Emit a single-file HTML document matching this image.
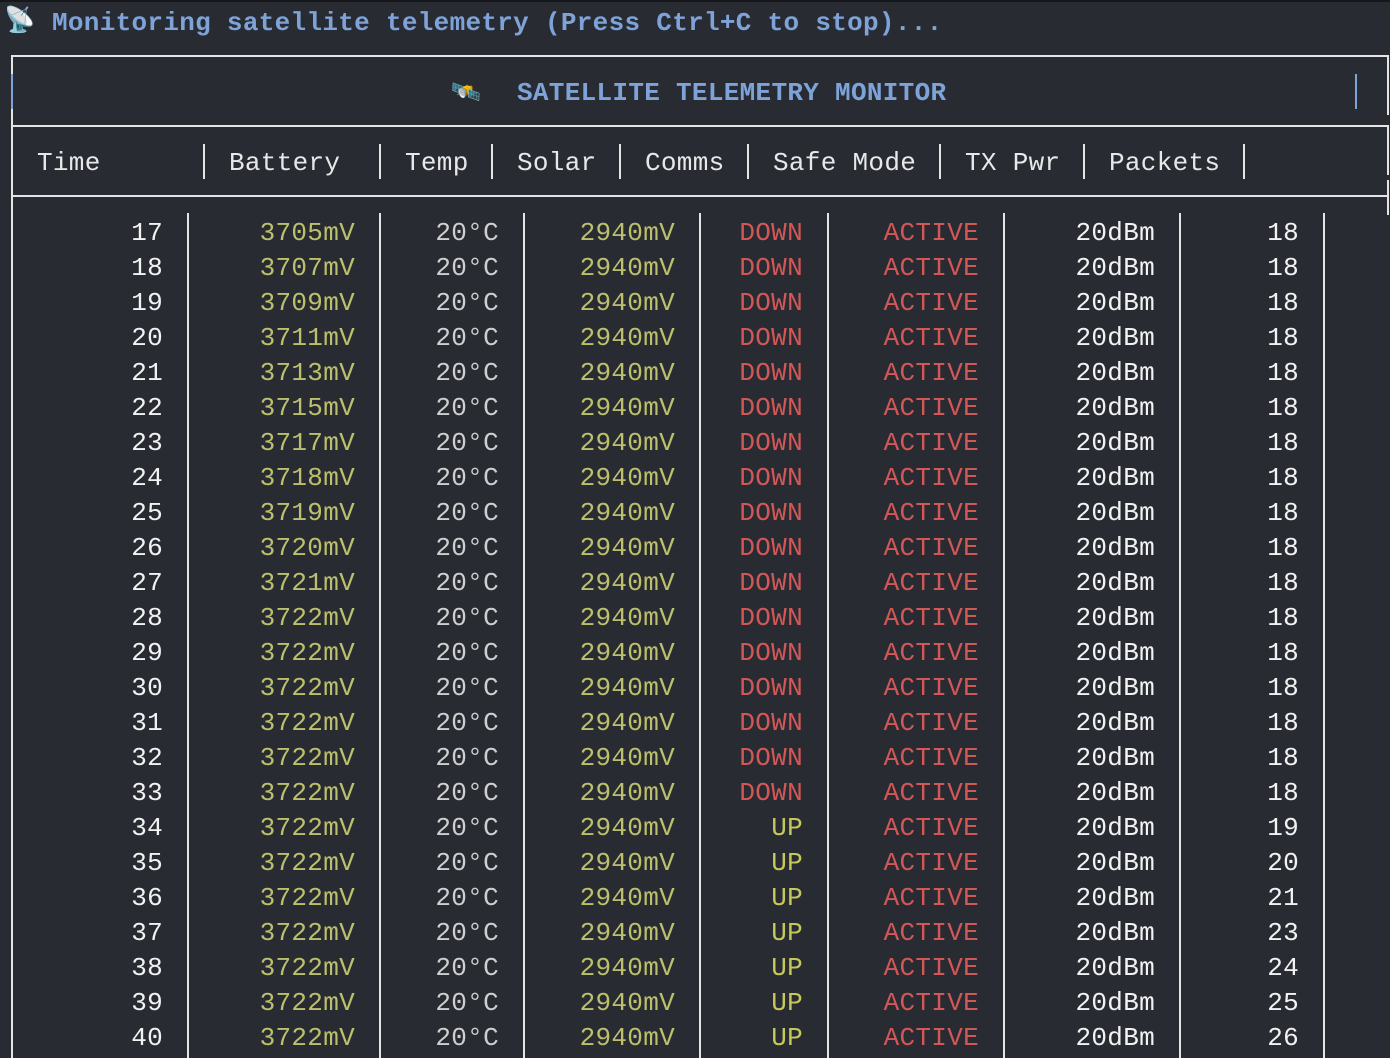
<!DOCTYPE html>
<html><head><meta charset="utf-8"><style>
html,body{margin:0;padding:0;background:#292b33;width:1390px;height:1058px;overflow:hidden;position:relative;font-family:"Liberation Mono","DejaVu Sans Mono",monospace;font-size:26px;letter-spacing:0.3px;}
.a{position:absolute;white-space:pre;}
.h{position:absolute;background:#e4e4e4;height:2px;}
.v{position:absolute;background:#e4e4e4;width:2px;}
.row{position:absolute;left:0;height:35px;line-height:35px;white-space:pre;}
.row span{display:inline-block;text-align:right;}
.c1{width:163px;color:#f2f2f2}.c2{width:192px;color:#bcc06c}.c3{width:144px;color:#cfcfcf}.c4{width:176px;color:#bcc06c}
.c5{width:128px}.c6{width:176px;color:#d25757}.c7{width:176px;color:#f2f2f2}.c8{width:144px;color:#f2f2f2}
.d{color:#d25757}.u{color:#c6c85a}
.hd{color:#e8e8e8;top:146px;line-height:34px}
</style></head><body>
<div style="position:absolute;left:0;top:0;width:1390px;height:2px;background:#16171b"></div>
<div class="a" style="left:4px;top:6px;font-size:25px;letter-spacing:0">📡</div>
<div class="a" style="left:52px;top:6px;line-height:34px;color:#7ea3d8;font-weight:bold">Monitoring satellite telemetry (Press Ctrl+C to stop)...</div>

<div class="h" style="left:12px;top:55px;width:1377px"></div>
<div class="h" style="left:12px;top:125px;width:1377px"></div>
<div class="h" style="left:12px;top:195px;width:1377px"></div>
<div class="v" style="left:11px;top:55px;height:1003px"></div>
<div class="v" style="left:1387px;top:55px;height:60px"></div>
<div class="v" style="left:1387px;top:125px;height:50px"></div>
<div class="v" style="left:1387px;top:180px;height:35px"></div>
<div style="position:absolute;left:11px;top:74px;width:2px;height:35px;background:#7ea3d8"></div>
<div style="position:absolute;left:1355px;top:74px;width:2px;height:35px;background:#7ea3d8"></div>
<div class="a" style="left:451px;top:78px;font-size:24px;letter-spacing:0">🛰️</div>
<div class="a" style="left:517px;top:76px;line-height:34px;color:#7ea3d8;font-weight:bold">SATELLITE TELEMETRY MONITOR</div>

<div class="a hd" style="left:37px">Time</div>
<div class="a hd" style="left:229px">Battery</div>
<div class="a hd" style="left:405px">Temp</div>
<div class="a hd" style="left:517px">Solar</div>
<div class="a hd" style="left:645px">Comms</div>
<div class="a hd" style="left:773px">Safe Mode</div>
<div class="a hd" style="left:965px">TX Pwr</div>
<div class="a hd" style="left:1109px">Packets</div>
<div class="v" style="left:203px;top:144px;height:35px"></div>
<div class="v" style="left:379px;top:144px;height:35px"></div>
<div class="v" style="left:491px;top:144px;height:35px"></div>
<div class="v" style="left:619px;top:144px;height:35px"></div>
<div class="v" style="left:747px;top:144px;height:35px"></div>
<div class="v" style="left:939px;top:144px;height:35px"></div>
<div class="v" style="left:1083px;top:144px;height:35px"></div>
<div class="v" style="left:1243px;top:144px;height:35px"></div>

<div class="v" style="left:187px;top:213px;height:845px"></div>
<div class="v" style="left:379px;top:213px;height:845px"></div>
<div class="v" style="left:523px;top:213px;height:845px"></div>
<div class="v" style="left:699px;top:213px;height:845px"></div>
<div class="v" style="left:827px;top:213px;height:845px"></div>
<div class="v" style="left:1003px;top:213px;height:845px"></div>
<div class="v" style="left:1179px;top:213px;height:845px"></div>
<div class="v" style="left:1323px;top:213px;height:845px"></div>

<div class="row" style="top:216px"><span class="c1">17</span><span class="c2">3705mV</span><span class="c3">20°C</span><span class="c4">2940mV</span><span class="c5 d">DOWN</span><span class="c6">ACTIVE</span><span class="c7">20dBm</span><span class="c8">18</span></div>
<div class="row" style="top:251px"><span class="c1">18</span><span class="c2">3707mV</span><span class="c3">20°C</span><span class="c4">2940mV</span><span class="c5 d">DOWN</span><span class="c6">ACTIVE</span><span class="c7">20dBm</span><span class="c8">18</span></div>
<div class="row" style="top:286px"><span class="c1">19</span><span class="c2">3709mV</span><span class="c3">20°C</span><span class="c4">2940mV</span><span class="c5 d">DOWN</span><span class="c6">ACTIVE</span><span class="c7">20dBm</span><span class="c8">18</span></div>
<div class="row" style="top:321px"><span class="c1">20</span><span class="c2">3711mV</span><span class="c3">20°C</span><span class="c4">2940mV</span><span class="c5 d">DOWN</span><span class="c6">ACTIVE</span><span class="c7">20dBm</span><span class="c8">18</span></div>
<div class="row" style="top:356px"><span class="c1">21</span><span class="c2">3713mV</span><span class="c3">20°C</span><span class="c4">2940mV</span><span class="c5 d">DOWN</span><span class="c6">ACTIVE</span><span class="c7">20dBm</span><span class="c8">18</span></div>
<div class="row" style="top:391px"><span class="c1">22</span><span class="c2">3715mV</span><span class="c3">20°C</span><span class="c4">2940mV</span><span class="c5 d">DOWN</span><span class="c6">ACTIVE</span><span class="c7">20dBm</span><span class="c8">18</span></div>
<div class="row" style="top:426px"><span class="c1">23</span><span class="c2">3717mV</span><span class="c3">20°C</span><span class="c4">2940mV</span><span class="c5 d">DOWN</span><span class="c6">ACTIVE</span><span class="c7">20dBm</span><span class="c8">18</span></div>
<div class="row" style="top:461px"><span class="c1">24</span><span class="c2">3718mV</span><span class="c3">20°C</span><span class="c4">2940mV</span><span class="c5 d">DOWN</span><span class="c6">ACTIVE</span><span class="c7">20dBm</span><span class="c8">18</span></div>
<div class="row" style="top:496px"><span class="c1">25</span><span class="c2">3719mV</span><span class="c3">20°C</span><span class="c4">2940mV</span><span class="c5 d">DOWN</span><span class="c6">ACTIVE</span><span class="c7">20dBm</span><span class="c8">18</span></div>
<div class="row" style="top:531px"><span class="c1">26</span><span class="c2">3720mV</span><span class="c3">20°C</span><span class="c4">2940mV</span><span class="c5 d">DOWN</span><span class="c6">ACTIVE</span><span class="c7">20dBm</span><span class="c8">18</span></div>
<div class="row" style="top:566px"><span class="c1">27</span><span class="c2">3721mV</span><span class="c3">20°C</span><span class="c4">2940mV</span><span class="c5 d">DOWN</span><span class="c6">ACTIVE</span><span class="c7">20dBm</span><span class="c8">18</span></div>
<div class="row" style="top:601px"><span class="c1">28</span><span class="c2">3722mV</span><span class="c3">20°C</span><span class="c4">2940mV</span><span class="c5 d">DOWN</span><span class="c6">ACTIVE</span><span class="c7">20dBm</span><span class="c8">18</span></div>
<div class="row" style="top:636px"><span class="c1">29</span><span class="c2">3722mV</span><span class="c3">20°C</span><span class="c4">2940mV</span><span class="c5 d">DOWN</span><span class="c6">ACTIVE</span><span class="c7">20dBm</span><span class="c8">18</span></div>
<div class="row" style="top:671px"><span class="c1">30</span><span class="c2">3722mV</span><span class="c3">20°C</span><span class="c4">2940mV</span><span class="c5 d">DOWN</span><span class="c6">ACTIVE</span><span class="c7">20dBm</span><span class="c8">18</span></div>
<div class="row" style="top:706px"><span class="c1">31</span><span class="c2">3722mV</span><span class="c3">20°C</span><span class="c4">2940mV</span><span class="c5 d">DOWN</span><span class="c6">ACTIVE</span><span class="c7">20dBm</span><span class="c8">18</span></div>
<div class="row" style="top:741px"><span class="c1">32</span><span class="c2">3722mV</span><span class="c3">20°C</span><span class="c4">2940mV</span><span class="c5 d">DOWN</span><span class="c6">ACTIVE</span><span class="c7">20dBm</span><span class="c8">18</span></div>
<div class="row" style="top:776px"><span class="c1">33</span><span class="c2">3722mV</span><span class="c3">20°C</span><span class="c4">2940mV</span><span class="c5 d">DOWN</span><span class="c6">ACTIVE</span><span class="c7">20dBm</span><span class="c8">18</span></div>
<div class="row" style="top:811px"><span class="c1">34</span><span class="c2">3722mV</span><span class="c3">20°C</span><span class="c4">2940mV</span><span class="c5 u">UP</span><span class="c6">ACTIVE</span><span class="c7">20dBm</span><span class="c8">19</span></div>
<div class="row" style="top:846px"><span class="c1">35</span><span class="c2">3722mV</span><span class="c3">20°C</span><span class="c4">2940mV</span><span class="c5 u">UP</span><span class="c6">ACTIVE</span><span class="c7">20dBm</span><span class="c8">20</span></div>
<div class="row" style="top:881px"><span class="c1">36</span><span class="c2">3722mV</span><span class="c3">20°C</span><span class="c4">2940mV</span><span class="c5 u">UP</span><span class="c6">ACTIVE</span><span class="c7">20dBm</span><span class="c8">21</span></div>
<div class="row" style="top:916px"><span class="c1">37</span><span class="c2">3722mV</span><span class="c3">20°C</span><span class="c4">2940mV</span><span class="c5 u">UP</span><span class="c6">ACTIVE</span><span class="c7">20dBm</span><span class="c8">23</span></div>
<div class="row" style="top:951px"><span class="c1">38</span><span class="c2">3722mV</span><span class="c3">20°C</span><span class="c4">2940mV</span><span class="c5 u">UP</span><span class="c6">ACTIVE</span><span class="c7">20dBm</span><span class="c8">24</span></div>
<div class="row" style="top:986px"><span class="c1">39</span><span class="c2">3722mV</span><span class="c3">20°C</span><span class="c4">2940mV</span><span class="c5 u">UP</span><span class="c6">ACTIVE</span><span class="c7">20dBm</span><span class="c8">25</span></div>
<div class="row" style="top:1021px"><span class="c1">40</span><span class="c2">3722mV</span><span class="c3">20°C</span><span class="c4">2940mV</span><span class="c5 u">UP</span><span class="c6">ACTIVE</span><span class="c7">20dBm</span><span class="c8">26</span></div>
</body></html>
